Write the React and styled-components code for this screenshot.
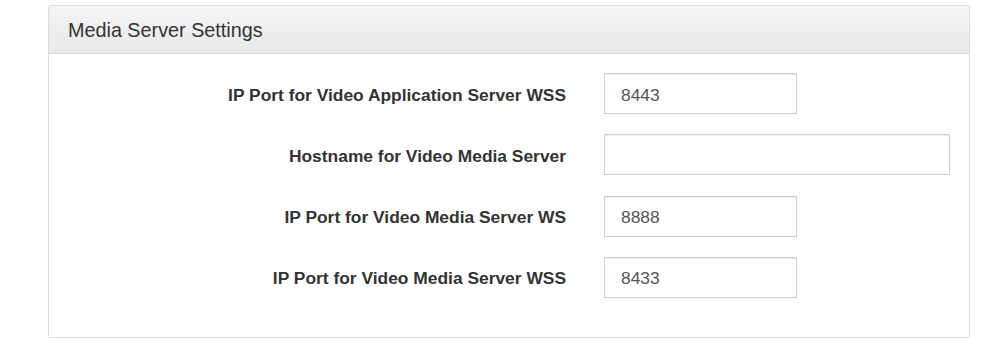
import { createGlobalStyle, styled } from 'styled-components'

const GlobalStyle = createGlobalStyle`
  html, body {
    margin: 0;
    padding: 0;
    background: #fff;
  }
  body {
    font-family: "Liberation Sans", Arial, Helvetica, sans-serif;
    color: #333;
  }
`

const fields = [
  { label: 'IP Port for Video Application Server WSS', value: '8443', wide: false },
  { label: 'Hostname for Video Media Server', value: '', wide: true },
  { label: 'IP Port for Video Media Server WS', value: '8888', wide: false },
  { label: 'IP Port for Video Media Server WSS', value: '8433', wide: false },
]

function App() {
  return (
    <>
      <GlobalStyle />
      <Page>
        <Panel>
          <PanelHeading>Media Server Settings</PanelHeading>
          <PanelBody>
            {fields.map((f) => (
              <FormRow key={f.label}>
                <Label>{f.label}</Label>
                <Input $wide={f.wide} defaultValue={f.value} />
              </FormRow>
            ))}
          </PanelBody>
        </Panel>
      </Page>
    </>
  )
}

const Page = styled.div`
  padding: 5px 20px 0 48px;
`

const Panel = styled.div`
  width: 922px;
  box-sizing: border-box;
  border: 1px solid #ddd;
  border-radius: 2px;
  background: #fff;
  box-shadow: 0 1px 1px rgba(0, 0, 0, 0.05);
`

const PanelHeading = styled.div`
  height: 48px;
  box-sizing: border-box;
  padding: 1px 19px 0;
  display: flex;
  align-items: center;
  font-size: 19.8px;
  color: #333;
  background: linear-gradient(to bottom, #f5f5f5 0%, #e8e8e8 100%);
  border-bottom: 1px solid #ddd;
`

const PanelBody = styled.div`
  padding: 19px 20px 39px 20px;
  display: flex;
  flex-direction: column;
  gap: 20.3px;
`

const FormRow = styled.div`
  display: grid;
  grid-template-columns: 497px 1fr;
  column-gap: 38px;
  align-items: center;
`

const Label = styled.label`
  padding-top: 3px;
  text-align: right;
  font-weight: bold;
  font-size: 17.4px;
  color: #333;
`

const Input = styled.input`
  width: ${(p) => (p.$wide ? '346px' : '193px')};
  height: 41px;
  box-sizing: border-box;
  padding: 3px 16px 0;
  font-family: "Liberation Sans", Arial, Helvetica, sans-serif;
  font-size: 17.4px;
  color: #555;
  background: #fff;
  border: 1px solid #ccc;
  border-radius: 0;
  box-shadow: inset 0 1px 1px rgba(0, 0, 0, 0.075);
  outline: none;
`

export default App
